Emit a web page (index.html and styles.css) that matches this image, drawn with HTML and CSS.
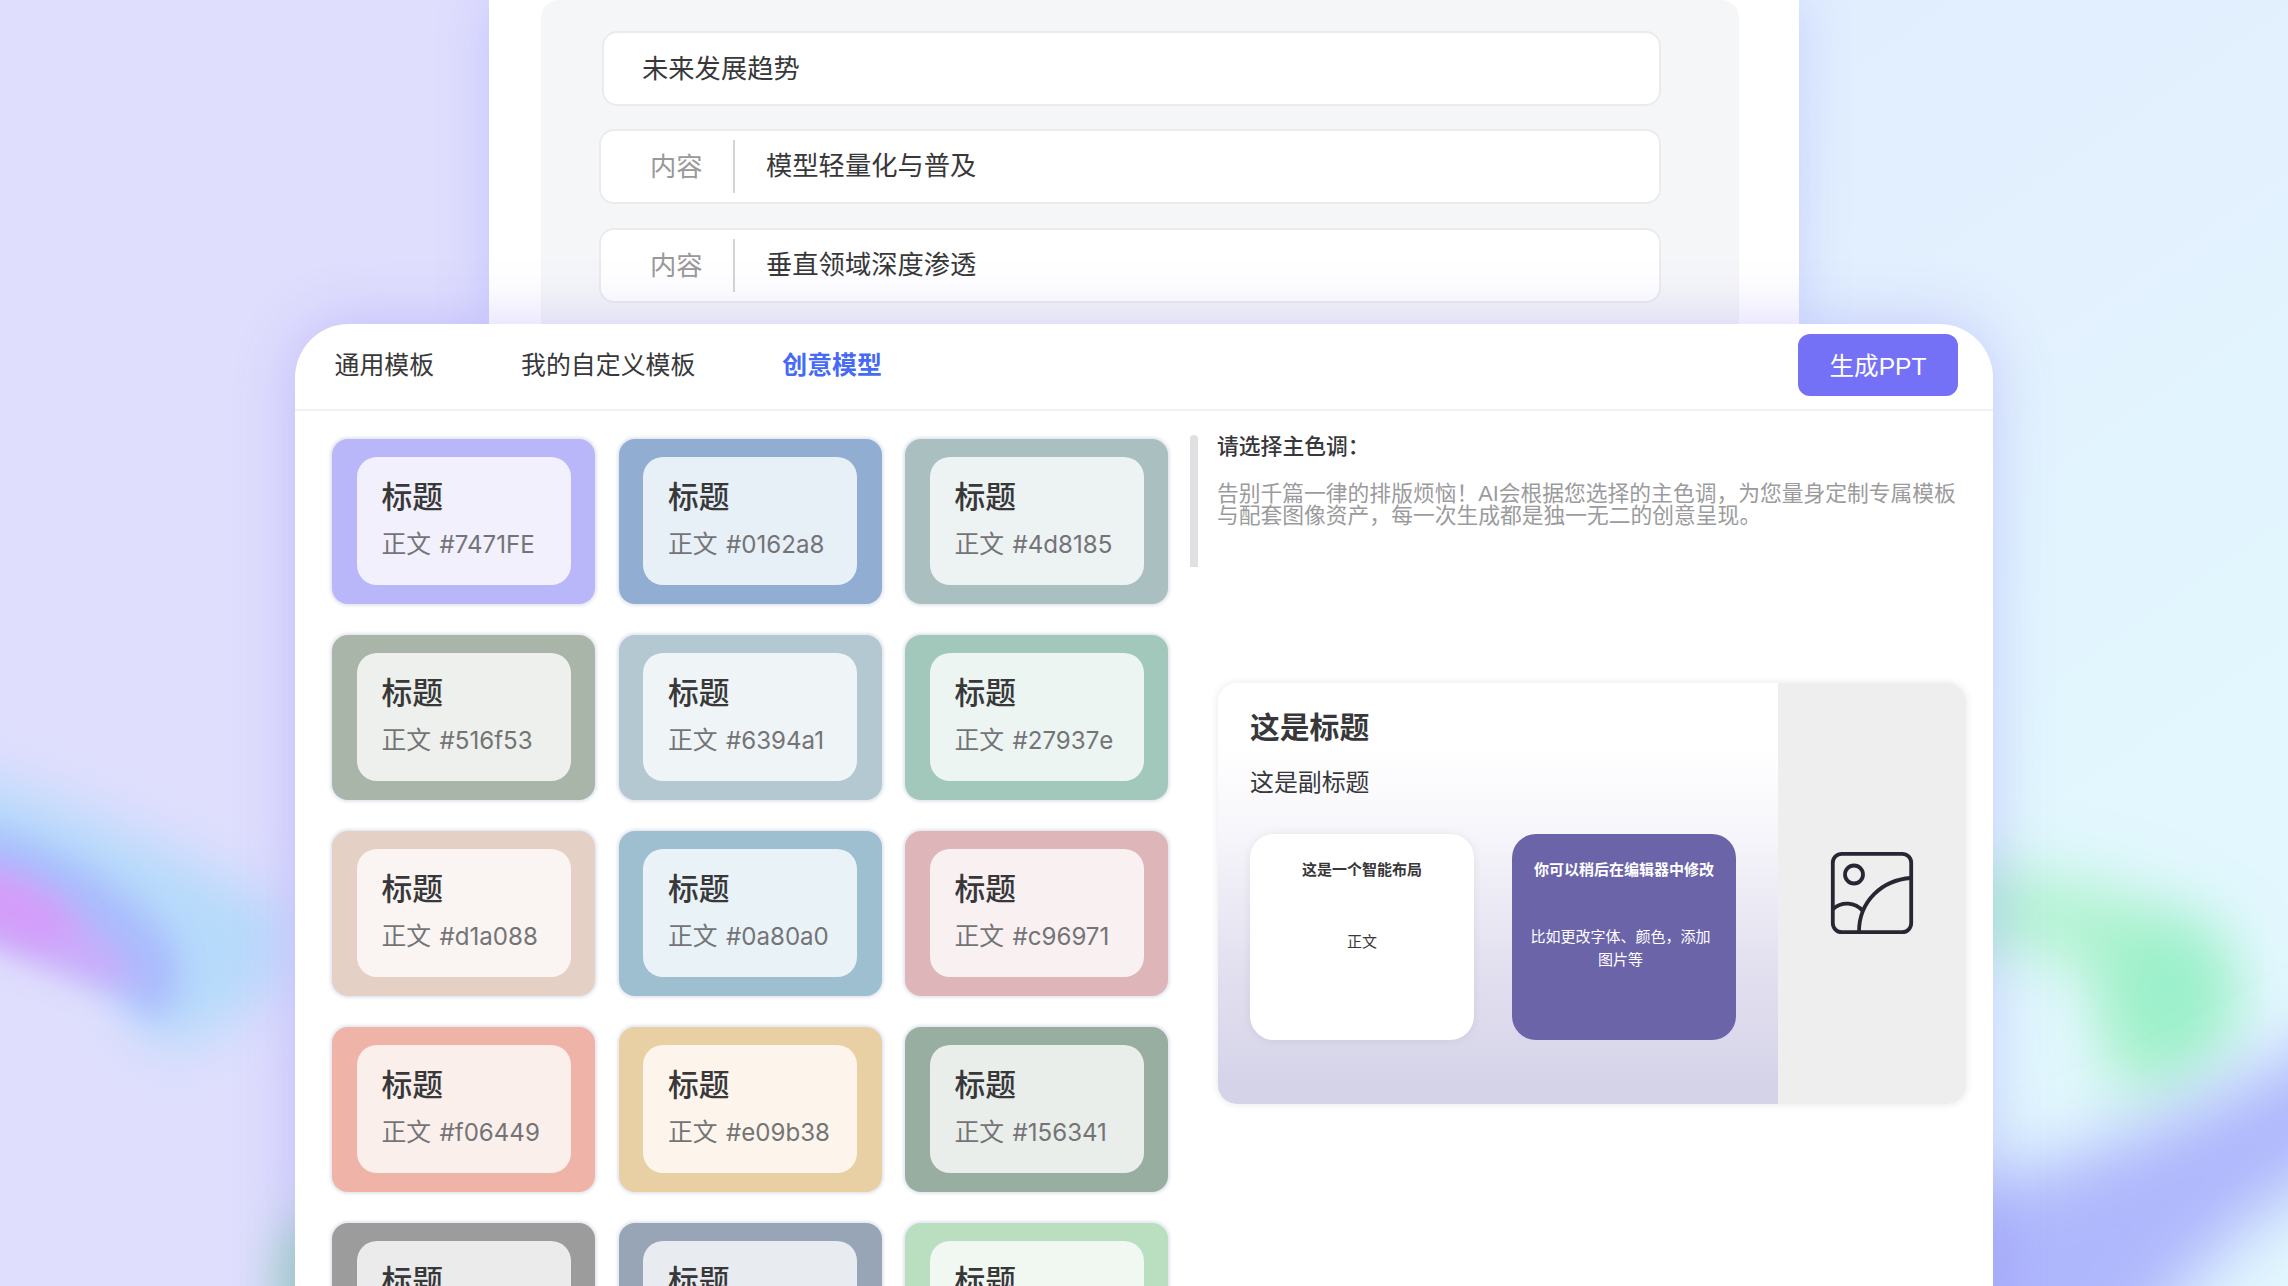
FILE: index.html
```html
<!DOCTYPE html>
<html lang="zh-CN">
<head>
<meta charset="utf-8">
<title>创意模型</title>
<link rel="stylesheet" href="styles.css">
</head>
<body>
<svg class="backdrop" viewBox="0 0 2288 1286" aria-hidden="true">
  <defs>
    <linearGradient id="base" x1="0" y1="0" x2="1" y2="0">
      <stop offset="0" stop-color="#dfdefd"/>
      <stop offset=".25" stop-color="#dfdefd"/>
      <stop offset=".78" stop-color="#e1eefe"/>
      <stop offset="1" stop-color="#e2f2fe"/>
    </linearGradient>
    <linearGradient id="corner" gradientUnits="userSpaceOnUse" x1="1800" y1="0" x2="2288" y2="700">
      <stop offset="0" stop-color="#e0eefe"/>
      <stop offset=".4" stop-color="#e3f0fe"/>
      <stop offset=".65" stop-color="#e2f4fe"/>
      <stop offset="1" stop-color="#e2f7fe"/>
    </linearGradient>
    <filter id="b16" x="-50%" y="-50%" width="200%" height="200%"><feGaussianBlur stdDeviation="16"/></filter>
    <filter id="b26" x="-50%" y="-50%" width="200%" height="200%"><feGaussianBlur stdDeviation="26"/></filter>
    <filter id="b34" x="-50%" y="-50%" width="200%" height="200%"><feGaussianBlur stdDeviation="34"/></filter>
  </defs>
  <rect width="2288" height="1286" fill="url(#base)"/>
  <rect x="1790" width="498" height="1286" fill="url(#corner)"/>
  <path d="M-60 765 C60 800 180 850 280 910 C300 980 240 1030 170 1050 C135 1040 130 1000 100 970 L-60 890Z" fill="#b6dafb" filter="url(#b26)"/>
  <path d="M-60 818 C30 828 120 875 172 940 C188 975 182 1005 150 1022 C110 970 20 920 -60 900Z" fill="#a9b9fd" opacity=".9" filter="url(#b16)"/>
  <path d="M-60 860 C20 865 90 910 140 985 C90 995 40 960 -60 930Z" fill="#d2a6fa" filter="url(#b16)" opacity=".8"/>
  <ellipse cx="10" cy="908" rx="66" ry="26" transform="rotate(24 10 908)" fill="#d49cf9" filter="url(#b16)"/>
  <ellipse cx="320" cy="1280" rx="40" ry="62" fill="#96d8b4" filter="url(#b26)"/>
  <path d="M1930 885 C2040 870 2140 890 2215 950 C2250 1000 2220 1060 2150 1100 C2090 1090 2120 1010 2090 970 C2060 945 2010 930 1930 940Z" fill="#a6f2c6" filter="url(#b34)"/>
  <ellipse cx="2172" cy="990" rx="46" ry="66" fill="#98efcc" filter="url(#b34)"/>
  <path d="M1920 1200 C2080 1165 2200 1110 2380 1010 L2380 1140 C2270 1200 2190 1260 2130 1370 L1920 1370Z" fill="#afb7fc" filter="url(#b34)"/>
</svg>

<main class="stage">
  <section class="outline">
    <div class="outline-body">
      <div class="row row-head">未来发展趋势</div>
      <div class="row"><span class="row-label">内容</span><span class="row-text">模型轻量化与普及</span></div>
      <div class="row"><span class="row-label">内容</span><span class="row-text">垂直领域深度渗透</span></div>
    </div>
  </section>

  <section class="panel">
    <header class="bar">
      <nav class="tabs">
        <a class="tab">通用模板</a>
        <a class="tab">我的自定义模板</a>
        <a class="tab tab-active">创意模型</a>
      </nav>
      <button class="generate">生成PPT</button>
    </header>
    <div class="content">
      <div class="swatches">
        <div class="swatch c1"><div class="sheet"><b>标题</b><span>正文 <i>#7471FE</i></span></div></div>
        <div class="swatch c2"><div class="sheet"><b>标题</b><span>正文 <i>#0162a8</i></span></div></div>
        <div class="swatch c3"><div class="sheet"><b>标题</b><span>正文 <i>#4d8185</i></span></div></div>
        <div class="swatch c4"><div class="sheet"><b>标题</b><span>正文 <i>#516f53</i></span></div></div>
        <div class="swatch c5"><div class="sheet"><b>标题</b><span>正文 <i>#6394a1</i></span></div></div>
        <div class="swatch c6"><div class="sheet"><b>标题</b><span>正文 <i>#27937e</i></span></div></div>
        <div class="swatch c7"><div class="sheet"><b>标题</b><span>正文 <i>#d1a088</i></span></div></div>
        <div class="swatch c8"><div class="sheet"><b>标题</b><span>正文 <i>#0a80a0</i></span></div></div>
        <div class="swatch c9"><div class="sheet"><b>标题</b><span>正文 <i>#c96971</i></span></div></div>
        <div class="swatch c10"><div class="sheet"><b>标题</b><span>正文 <i>#f06449</i></span></div></div>
        <div class="swatch c11"><div class="sheet"><b>标题</b><span>正文 <i>#e09b38</i></span></div></div>
        <div class="swatch c12"><div class="sheet"><b>标题</b><span>正文 <i>#156341</i></span></div></div>
        <div class="swatch c13"><div class="sheet"><b>标题</b></div></div>
        <div class="swatch c14"><div class="sheet"><b>标题</b></div></div>
        <div class="swatch c15"><div class="sheet"><b>标题</b></div></div>
      </div>
      <div class="scrollbar"></div>
      <div class="detail">
        <h2>请选择主色调：</h2>
        <p class="intro">告别千篇一律的排版烦恼！AI会根据您选择的主色调，为您量身定制专属模板<br>与配套图像资产，每一次生成都是独一无二的创意呈现。</p>
        <div class="preview">
          <div class="slide">
            <h3>这是标题</h3>
            <h4>这是副标题</h4>
            <div class="blocks">
              <div class="block"><strong>这是一个智能布局</strong><p class="single">正文</p></div>
              <div class="block block-accent"><strong>你可以稍后在编辑器中修改</strong><p>比如更改字体、颜色，添加<br>图片等</p></div>
            </div>
          </div>
          <div class="picture">
            <svg class="picture-icon" viewBox="0 0 84 84" fill="none" stroke="#272633" stroke-width="3.8">
              <rect x="2.8" y="2.8" width="78.4" height="78.4" rx="9"/>
              <circle cx="24" cy="23.5" r="9"/>
              <path d="M81 27 C52 29 29 50 29 81"/>
              <path d="M3 58 C12 50 25 51 33 60"/>
            </svg>
          </div>
        </div>
      </div>
    </div>
  </section>
</main>
</body>
</html>
```

FILE: styles.css
```css
* { box-sizing: border-box; }

body {
  margin: 0;
  width: 2288px;
  height: 1286px;
  overflow: hidden;
  color: #38383a;
  font-family: "Liberation Sans", "Noto Sans CJK SC", sans-serif;
}

.backdrop {
  position: absolute;
  inset: 0;
  width: 2288px;
  height: 1286px;
}

.stage {
  position: relative;
  height: 1286px;
  overflow: hidden;
  display: flex;
  flex-direction: column;
  align-items: center;
}

/* outline editor at the top */
.outline {
  flex: none;
  width: 1310px;
  height: 324px;
  padding: 0 60px 0 52px;
  background: #fff;
  box-shadow: 0 0 50px rgba(116, 113, 254, .24);
}

.outline-body {
  height: 324px;
  padding: 30.5px 78px 0 58px;
  display: flex;
  flex-direction: column;
  gap: 23.5px;
  border-radius: 18px 18px 0 0;
  background: #f5f6f8;
}

.row {
  flex: none;
  height: 75px;
  display: flex;
  align-items: center;
  border: 2px solid #ebebed;
  border-radius: 15px;
  background: #fff;
  font-size: 26.3px;
  line-height: 40px;
}

.row-head { margin-left: 3px; padding: 1px 0 0 38px; }

.row-label {
  width: 134px;
  height: 53px;
  padding-left: 49px;
  line-height: 55px;
  border-right: 2px solid #d4d4d6;
  color: #999;
}

.row-text { padding-left: 31px; line-height: 55px; }

/* template panel */
.panel {
  position: relative;
  flex: none;
  width: 1698px;
  height: 1010px;
  border-radius: 54px 54px 0 0;
  background: #fff;
  box-shadow: 0 0 60px rgba(116, 103, 240, .29);
}

.bar {
  height: 87px;
  padding: 0 35px 3px 39.5px;
  display: flex;
  align-items: center;
  justify-content: space-between;
  border-bottom: 2px solid #f1f1f3;
}

.tabs { display: flex; gap: 87px; }

.tab { font-size: 24.9px; line-height: 40px; }

.tab-active { color: #466af6; font-weight: 700; }

.generate {
  width: 160px;
  height: 62px;
  padding: 0 0 3px;
  border: 0;
  border-radius: 12px;
  background: #7471f7;
  color: #fff;
  font: inherit;
  font-size: 24.6px;
}

.content {
  padding: 24px 27px 0 37px;
  display: flex;
  align-items: flex-start;
}

.swatches {
  padding-top: 3.5px;
  display: grid;
  grid-template-columns: repeat(3, 263px);
  grid-auto-rows: 165px;
  gap: 31px 23.5px;
}

.swatch {
  padding: 18.5px 24.5px;
  border-radius: 16px;
  box-shadow: 0 0 3px 2px #e4e7ef;
}

.sheet {
  height: 128px;
  padding: 18px 0 0 25px;
  border-radius: 20px;
  white-space: nowrap;
}

.sheet b {
  display: block;
  font-size: 30.8px;
  font-weight: 500;
  line-height: 46px;
}

.sheet span {
  display: block;
  margin-top: 4px;
  color: #747477;
  font-size: 24.8px;
  line-height: 40px;
}

.sheet i {
  margin-left: 1.5px;
  font-family: Inter, sans-serif;
  font-size: 24.1px;
  font-style: normal;
}

.c1 { background: #b9b7fa; } .c1 .sheet { background: #f1f0fc; }
.c2 { background: #92add2; } .c2 .sheet { background: #e7eff7; }
.c3 { background: #aabfc0; } .c3 .sheet { background: #edf2f3; }
.c4 { background: #a9b5a8; } .c4 .sheet { background: #edf0ec; }
.c5 { background: #b4c8d1; } .c5 .sheet { background: #eff4f6; }
.c6 { background: #a2c8bc; } .c6 .sheet { background: #ecf5f2; }
.c7 { background: #e4d0c5; } .c7 .sheet { background: #faf5f2; }
.c8 { background: #9ebfcf; } .c8 .sheet { background: #e9f3f7; }
.c9 { background: #deb6b9; } .c9 .sheet { background: #f9f0f1; }
.c10 { background: #efb3a8; } .c10 .sheet { background: #fbefec; }
.c11 { background: #e8cfa4; } .c11 .sheet { background: #fdf5ec; }
.c12 { background: #98aea1; } .c12 .sheet { background: #e9eeea; }
.c13 { background: #9c9c9c; } .c13 .sheet { background: #ebebeb; }
.c14 { background: #97a5b7; } .c14 .sheet { background: #e8ebf0; }
.c15 { background: #b9dfc0; } .c15 .sheet { background: #f1f7f1; }

.scrollbar {
  width: 8px;
  height: 132px;
  margin-left: 22px;
  border-radius: 4px 4px 0 0;
  background: #e0e0e2;
}

.detail { width: 749px; margin-left: 19px; }

h2 {
  margin: 0;
  font-size: 21.8px;
  font-weight: 500;
  line-height: 24px;
}

.intro {
  margin: 24px 0 0;
  color: #9b9b9d;
  font-size: 21.77px;
  line-height: 22.3px;
  white-space: nowrap;
}

.preview {
  margin: 155px 0 0 1px;
  height: 421px;
  display: flex;
  overflow: hidden;
  border-radius: 19px;
  box-shadow: 0 0 8px rgba(0, 0, 0, .1);
}

.slide {
  width: 560px;
  padding: 22px 0 0 32px;
  background: linear-gradient(#fff 15%, #f8f8fc 32%, #e4e2f0 65%, #d5d3e8 95%);
}

h3 { margin: 0; font-size: 29.8px; font-weight: 700; line-height: 46px; }

h4 { margin: 12px 0 0; font-size: 23.9px; font-weight: 400; line-height: 40px; }

.blocks { margin-top: 31px; display: flex; gap: 38px; }

.block {
  width: 224px;
  height: 206px;
  padding-top: 25px;
  border-radius: 24px;
  background: #fff;
  box-shadow: 0 0 10px rgba(0, 0, 0, .07);
  font-size: 15px;
  line-height: 22.6px;
  text-align: center;
}

.block strong { display: block; }

.block p { margin: 45px 0 0; }

.block .single { margin-top: 50px; }

.block-accent { background: #6c64a8; color: #fff; box-shadow: none; }

.block-accent p { padding-right: 7px; }

.picture {
  flex: 1;
  display: grid;
  place-items: center;
  background: #eee;
}

.picture-icon { width: 84px; height: 84px; }
```
